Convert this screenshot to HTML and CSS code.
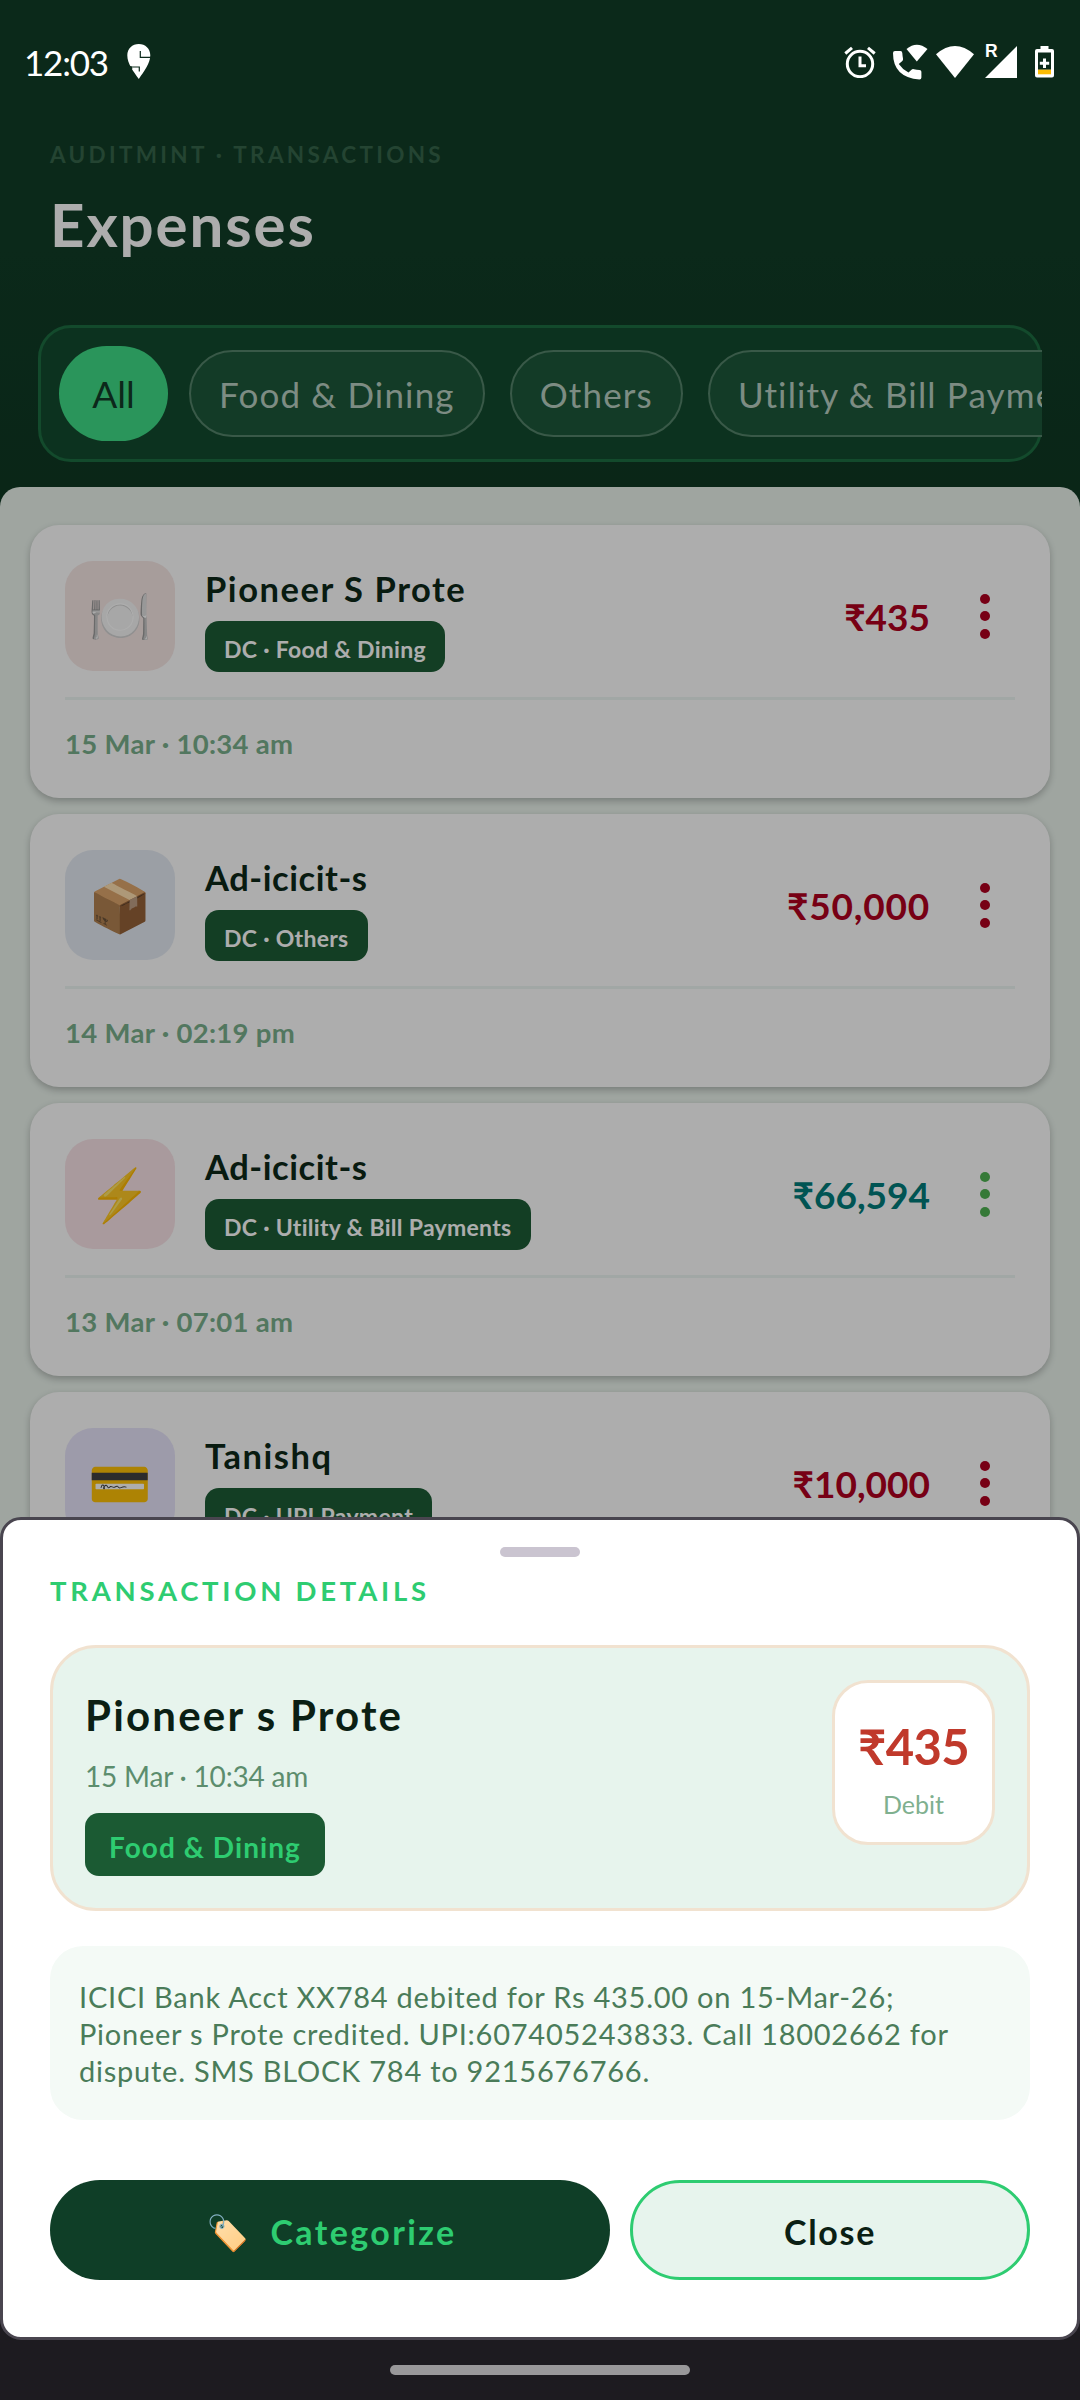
FILE: index.html
```html
<!DOCTYPE html>
<html lang="en">
<head>
<meta charset="utf-8">
<title>AuditMint – Expenses</title>
<link rel="stylesheet" href="styles.css">
</head>
<body>
<div class="screen">
  <header class="statusbar">
    <span class="clock">12:03</span>
    <svg class="app-icon" width="24" height="35" viewBox="0 0 24 35"><path fill="#fff" d="M11.800 0C18.300 0 23.300 4.700 23.300 11.300C23.300 19 17 27.500 11.800 35C6.500 27.500 .3 20 .3 11.300C.3 4.700 5.300 0 11.800 0z"/><path fill="none" stroke="#0c2a1b" stroke-width="1.200" d="M13.300 7v6.300H24M2 23h10.300v4.500"/><path fill="#0c2a1b" d="M0 20.500L2 22.300h2.500l1 2.200L3 26z"/></svg>
    <div class="status-icons">
      <svg width="32" height="32" viewBox="0 0 32 32" fill="none" stroke="#fff"><circle cx="16" cy="18" r="12.700" stroke-width="3"/><path stroke-width="3" d="M1.300 7.500 8 1.800M30.700 7.500 24 1.800M16 10.500v9.300h6"/></svg>
      <svg class="i-call" width="35" height="36" viewBox="0 0 35 36" fill="#fff"><path d="M13.500 5Q23.800-3.500 34.500 5L23.800 17.500z"/><path d="M0 9Q0 7 2 7H7.500Q9.200 7 9.300 9Q9.500 12 10 14.500Q10.300 16 9.300 17L5.800 20Q9.500 25.500 15.500 28.500L18.500 25.700Q19.500 24.700 21 25.200Q23.500 25.700 26.500 26Q28.400 26.200 28.400 27.700V33.500Q28.400 35.500 26.500 35.500Q0 33.500 0 9z"/></svg>
      <svg class="i-wifi" width="38" height="32" viewBox="0 0 38 32" fill="#fff"><path d="M0 8.300Q19-8.300 38 8.300L19 32z"/></svg>
      <span class="signal"><svg width="32" height="32" viewBox="0 0 32 32" fill="#fff"><path d="M32 0v32H0z"/></svg><b class="roaming">R</b></span>
      <svg class="i-batt" width="19" height="32" viewBox="0 0 19 32"><path fill="#fff" fill-rule="evenodd" d="M5.500 0h8v3H17q2 0 2 2v24.500q0 2-2 2H2q-2 0-2-2V5q0-2 2-2h3.500zM3 6.500v17.200h13V6.500z"/><path fill="#fff" d="M8 12.500h3v3.200h3.200v3H11V22H8v-3.300H4.800v-3H8z"/><path fill="#fbbc04" d="M3 23.700h13v4.600H3z"/></svg>
    </div>
  </header>

  <section class="heading">
    <p class="eyebrow">AUDITMINT · TRANSACTIONS</p>
    <h1 class="title">Expenses</h1>
  </section>

  <nav class="filters">
    <div class="filters__box">
      <span class="chip chip--active">All</span>
      <span class="chip">Food &amp; Dining</span>
      <span class="chip">Others</span>
      <span class="chip">Utility &amp; Bill Payments</span>
    </div>
  </nav>

  <main class="tray">
    <article class="card">
      <div class="card__row">
        <div class="tile tile--food">🍽️</div>
        <div class="card__info"><h2 class="name">Pioneer S Prote</h2><span class="pill">DC · Food &amp; Dining</span></div>
        <span class="amount">₹435</span>
        <div class="dots"><i></i><i></i><i></i></div>
      </div>
      <p class="date">15 Mar · 10:34 am</p>
    </article>
    <article class="card">
      <div class="card__row">
        <div class="tile tile--box">📦</div>
        <div class="card__info"><h2 class="name name--tight">Ad-icicit-s</h2><span class="pill">DC · Others</span></div>
        <span class="amount amount--wide">₹50,000</span>
        <div class="dots"><i></i><i></i><i></i></div>
      </div>
      <p class="date">14 Mar · 02:19 pm</p>
    </article>
    <article class="card card--credit">
      <div class="card__row">
        <div class="tile tile--bill">⚡</div>
        <div class="card__info"><h2 class="name name--tight">Ad-icicit-s</h2><span class="pill">DC · Utility &amp; Bill Payments</span></div>
        <span class="amount">₹66,594</span>
        <div class="dots"><i></i><i></i><i></i></div>
      </div>
      <p class="date">13 Mar · 07:01 am</p>
    </article>
    <article class="card">
      <div class="card__row">
        <div class="tile tile--upi">💳</div>
        <div class="card__info"><h2 class="name">Tanishq</h2><span class="pill">DC · UPI Payment</span></div>
        <span class="amount">₹10,000</span>
        <div class="dots"><i></i><i></i><i></i></div>
      </div>
    </article>
  </main>

  <div class="scrim"></div>
  <footer class="navbar"><span class="navbar__handle"></span></footer>

  <section class="sheet">
    <span class="sheet__handle"></span>
    <h2 class="sheet__title">TRANSACTION DETAILS</h2>
    <div class="detail">
      <div class="detail__info">
        <h3 class="detail__name">Pioneer s Prote</h3>
        <p class="detail__date">15 Mar · 10:34 am</p>
        <span class="detail__pill">Food &amp; Dining</span>
      </div>
      <div class="total">
        <strong class="total__value">₹435</strong>
        <span class="total__type">Debit</span>
      </div>
    </div>
    <p class="message">ICICI Bank Acct XX784 debited for Rs 435.00 on 15-Mar-26;<br>Pioneer s Prote credited. UPI:607405243833. Call 18002662 for<br>dispute. SMS BLOCK 784 to 9215676766.</p>
    <div class="actions">
      <button class="btn btn--primary"><span class="btn__icon">🏷️</span>Categorize</button>
      <button class="btn btn--outline">Close</button>
    </div>
  </section>
</div>
</body>
</html>
```
FILE: styles.css
```css
* { box-sizing: border-box; margin: 0; padding: 0; }

body { font-family: Lato, "Noto Color Emoji", sans-serif; }

.screen {
  position: relative;
  width: 1080px;
  height: 2400px;
  overflow: hidden;
  display: flex;
  flex-direction: column;
  background: linear-gradient(#113d27 0, #113d27 250px, #0f3823 487px);
}

/* Status bar */
.statusbar {
  position: relative;
  z-index: 2;
  flex: none;
  height: 123px;
  padding: 0 26px 0 24px;
  display: flex;
  align-items: center;
  color: #fff;
}
.clock { font-size: 35px; letter-spacing: -1.2px; width: 103px; }
.status-icons { margin-left: auto; display: flex; align-items: center; }
.i-call { margin-left: 17px; }
.i-wifi { margin-left: 8px; }
.signal { position: relative; height: 32px; margin-left: 11px; }
.roaming { position: absolute; left: 0; top: -5px; font: 700 17.5px/20px "Liberation Sans", sans-serif; }
.i-batt { margin-left: 18px; }

/* Page heading */
.heading { height: 135px; padding: 17px 50px 0; }
.eyebrow { font-size: 22.5px; font-weight: 700; line-height: 30px; letter-spacing: 3.3px; color: #35654a; }
.title { margin-top: 19px; font-size: 60px; line-height: 70px; letter-spacing: 1.9px; color: #fff; }

/* Category filter */
.filters { flex: none; margin: 67px 38px 0; overflow: hidden; }
.filters__box {
  height: 137px;
  padding: 0 18px;
  display: flex;
  align-items: center;
  gap: 25px;
  border: 3px solid #1d6d41;
  border-radius: 33px;
  background: #134b2e;
}
.chip {
  flex: none;
  height: 87px;
  padding: 0 28px;
  display: flex;
  align-items: center;
  border: 2px solid #54836a;
  border-radius: 44px;
  background: #1d583a;
  color: #b8cfc1;
  font-size: 35px;
  letter-spacing: 1.15px;
}
.chip--active {
  width: 109px;
  height: 95px;
  margin-right: -4px;
  justify-content: center;
  border: 0;
  border-radius: 48px;
  background: #3edc87;
  color: #133c28;
  font-size: 37px;
  letter-spacing: 0;
}

/* Transactions */
.tray {
  flex: none;
  margin-top: 25px;
  padding: 38px 30px;
  display: flex;
  flex-direction: column;
  gap: 16px;
  border-radius: 20px 20px 0 0;
  background: #eaf3ec;
}
.card {
  height: 273px;
  padding: 36px 35px 0;
  border-radius: 29px;
  background: #fff;
  box-shadow: 0 3px 7px rgba(0, 0, 0, .24);
  --tone: #b00020;
  --dot: #b00020;
}
.card--credit { --tone: #007c7b; --dot: #4fb352; }
.card__row {
  height: 139px;
  display: flex;
  align-items: flex-start;
  border-bottom: 3px solid #eef7f3;
}
.tile {
  width: 110px;
  height: 110px;
  display: flex;
  align-items: center;
  justify-content: center;
  border-radius: 28px;
  font-size: 51px;
  line-height: 60px;
}
.tile--food { background: #f7e7e5; }
.tile--box { background: #e5ebf4; }
.tile--bill { background: #fae4e8; }
.tile--upi { background: #e8e5fb; }
.card__info { margin-left: 30px; padding-top: 7px; }
.name { font-size: 34.5px; line-height: 42px; letter-spacing: 1.55px; color: #0d2819; }
.name--tight { letter-spacing: .55px; }
.pill {
  display: flex;
  align-items: center;
  width: fit-content;
  height: 51px;
  margin-top: 11px;
  padding: 4px 19px 0;
  border-radius: 14px;
  background: #1c5c35;
  color: #fff;
  font-size: 23px;
  font-weight: 700;
  letter-spacing: .3px;
}
.amount {
  margin-left: auto;
  padding-top: 1px;
  font-size: 37px;
  line-height: 110px;
  font-weight: 700;
  color: var(--tone);
}
.amount--wide { letter-spacing: .8px; }
.dots {
  width: 60px;
  height: 110px;
  margin-left: 25px;
  display: flex;
  flex-direction: column;
  align-items: center;
  justify-content: center;
  gap: 7.5px;
}
.dots i { width: 10px; height: 10px; border-radius: 50%; background: var(--dot); }
.date { margin-top: 27px; font-size: 27.5px; font-weight: 700; line-height: 34px; letter-spacing: .3px; color: #7ab08c; }

.scrim { position: absolute; inset: 0; background: rgba(0, 0, 0, .32); }

/* System navigation area */
.navbar {
  position: absolute;
  inset: 2310px 0 0;
  padding-top: 55px;
  background: #1d1b20;
}
.navbar__handle { display: block; width: 300px; height: 10px; margin: 0 auto; border-radius: 5px; background: #99989a; }

/* Bottom sheet */
.sheet {
  position: absolute;
  inset: 1517px 0 60px;
  padding: 27px 47px 0;
  border: 3px solid #49454f;
  border-radius: 21px;
  background: #fff;
}
.sheet__handle { display: block; width: 80px; height: 10px; margin: 0 auto; border-radius: 5px; background: #cac4d0; }
.sheet__title { margin-top: 17px; font-size: 27.5px; line-height: 34px; letter-spacing: 3.75px; color: #2ecc71; }
.detail {
  height: 266px;
  margin-top: 37px;
  padding: 32px 32px 0;
  display: flex;
  justify-content: space-between;
  align-items: flex-start;
  border: 3px solid #f1e2d0;
  border-radius: 46px;
  background: #e7f4ed;
}
.detail__info { padding-top: 10px; }
.detail__name { font-size: 42px; line-height: 50px; letter-spacing: 2.2px; color: #0b1f14; }
.detail__date { margin-top: 19px; font-size: 28px; line-height: 34px; letter-spacing: -.2px; color: #5c8d6d; }
.detail__pill {
  display: flex;
  align-items: center;
  width: fit-content;
  height: 63px;
  margin-top: 20px;
  padding: 4px 24px 0;
  border-radius: 14px;
  background: #1b5a33;
  color: #2ecc71;
  font-size: 28px;
  font-weight: 700;
  letter-spacing: 1.05px;
}
.total {
  width: 163px;
  height: 165px;
  padding-top: 33px;
  display: flex;
  flex-direction: column;
  align-items: center;
  border: 3px solid #f1e2d0;
  border-radius: 36px;
  background: #fff;
}
.total__value { font-size: 49px; line-height: 60px; letter-spacing: -.7px; color: #c0392b; }
.total__type { margin-top: 12px; font-size: 25px; line-height: 32px; color: #7fb08f; }
.message {
  height: 174px;
  margin-top: 35px;
  padding: 32px 29px 0;
  border-radius: 33px;
  background: #f4faf6;
  color: #4a7c59;
  font-size: 29px;
  line-height: 37px;
  letter-spacing: .76px;
  white-space: nowrap;
}
.actions { margin-top: 60px; display: grid; grid-template-columns: 560px 400px; gap: 20px; }
.btn {
  height: 100px;
  padding-top: 3px;
  display: flex;
  align-items: center;
  justify-content: center;
  border: 0;
  border-radius: 50px;
  font: 700 34px Lato, "Noto Color Emoji", sans-serif;
}
.btn--primary { padding-left: 3px; background: #0f3e27; color: #2ecc71; letter-spacing: 2.4px; }
.btn--outline { border: 3px solid #2ecc71; background: #e7f4ed; color: #0b1f14; letter-spacing: 1.7px; }
.btn__icon { margin-right: 21px; font-size: 34.500px; letter-spacing: 0; }
```
